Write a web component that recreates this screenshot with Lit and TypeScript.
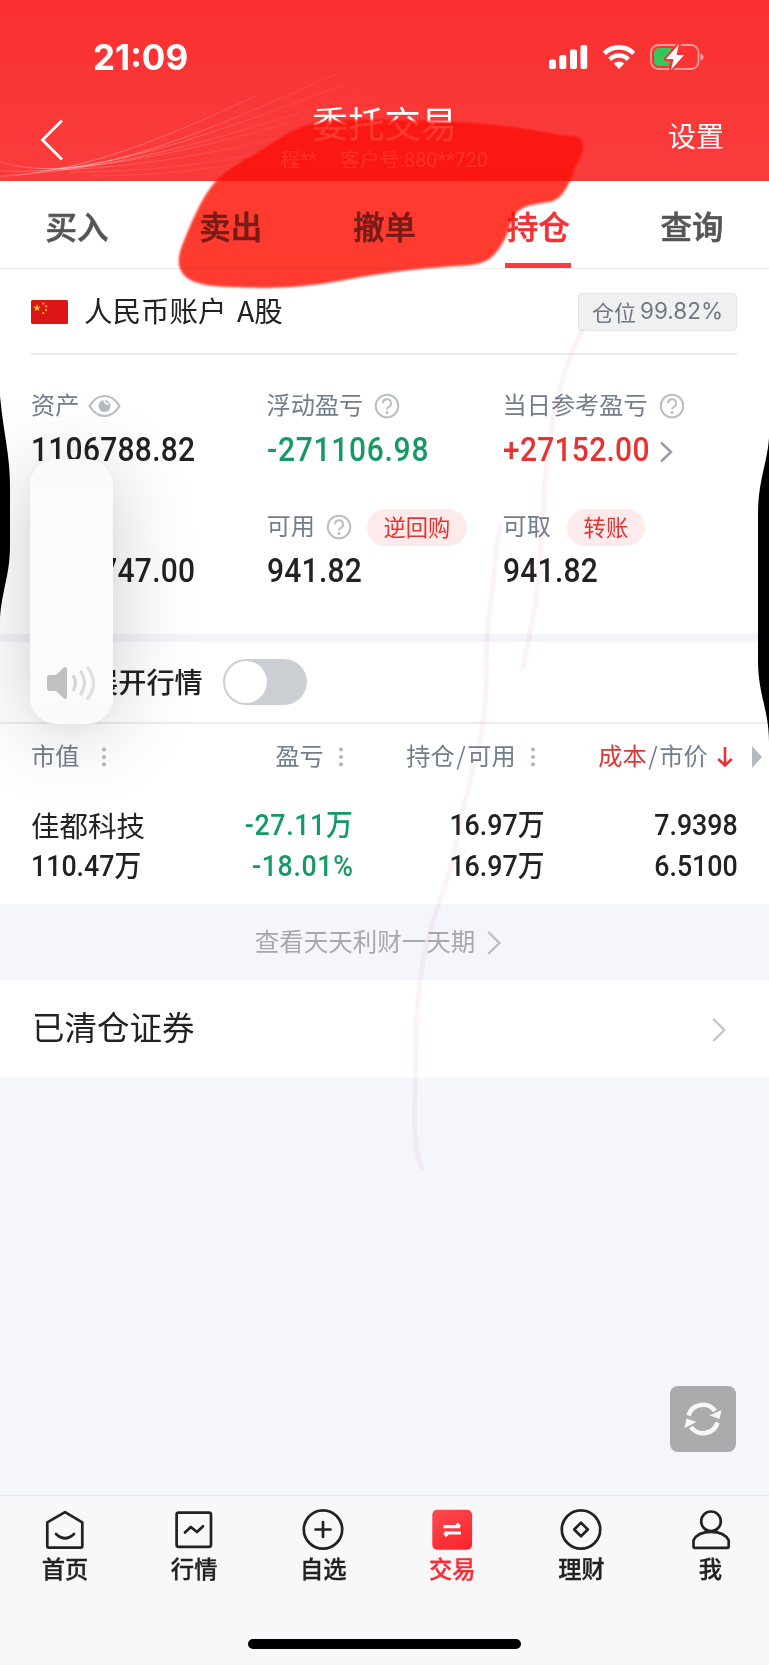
import { LitElement, html, css, svg } from "lit";
import { customElement } from "lit/decorators.js";

const help = html`<svg class="help" width="26" height="26" viewBox="0 0 26 26" fill="none" stroke="#b9bec5" stroke-width="2">
  <circle cx="13" cy="13" r="11.3"/><path d="M9 10.3a4 4 0 1 1 5.8 3.5c-1.3.7-1.8 1.2-1.8 2.7"/><circle cx="13" cy="19.6" r="1.5" fill="#b9bec5" stroke="none"/></svg>`;
const dots = html`<svg class="dots" width="6" height="20" viewBox="0 0 6 20" fill="#b5bac2"><circle cx="3" cy="2.5" r="2.1"/><circle cx="3" cy="10" r="2.1"/><circle cx="3" cy="17.3" r="2.1"/></svg>`;
const chevron = (c: string, w = 2) => html`<svg width="14" height="26" viewBox="0 0 14 26" fill="none" stroke=${c} stroke-width=${w}><path d="M1.3 2 12.4 13 1.3 24"/></svg>`;

const navIcons = [
  svg`<path d="M21 4.2 38.3 14.4V38a1.7 1.7 0 0 1-1.7 1.7H5A1.7 1.7 0 0 1 3.3 38V14.4Z"/><path d="M12 26q9 8.5 18 0"/>`,
  svg`<rect x="3.6" y="4.6" width="34.4" height="34.2" rx="2"/><path d="m12 24.5 5.8-5.5 6.2 5 6-5.8"/>`,
  svg`<circle cx="21" cy="21.5" r="19.2"/><path d="M21 14v15M13.5 21.5h15"/>`,
  svg`<defs><linearGradient id="g" x1="0" y1="0" x2=".6" y2="1"><stop offset="0" stop-color="#fd4b4e"/><stop offset="1" stop-color="#fb2730"/></linearGradient></defs><rect x="1.3" y="1.8" width="39.8" height="40" rx="5" fill="url(#g)" stroke="none"/><path d="M12.5 18.7H29M25.5 15.8l3.5 2.9M30 25H13.5M13.5 25l2.8 3" stroke="#fff" stroke-width="3.2" stroke-linecap="butt"/>`,
  svg`<circle cx="21" cy="21.5" r="19.2"/><path d="m21 14.7 6.8 6.8-6.8 6.8-6.8-6.8z"/>`,
  svg`<circle cx="21" cy="13.3" r="9.8"/><path d="M3.5 38.8v-6.5C6 27 12 23.8 21 23.8S36 27 38.7 32.3v6.5a1 1 0 0 1-1 1H4.5a1 1 0 0 1-1-1Z"/>`,
];

@customElement("app-root")
export class AppRoot extends LitElement {
  static styles = css`
    :host { display: flex; flex-direction: column; position: relative; width: 769px; height: 1665px; overflow: hidden; background: #f4f6fb; color: #222; font-family: "Noto Sans CJK SC", sans-serif; isolation: isolate; white-space: nowrap; }
    * { box-sizing: border-box; }
    svg { display: block; flex: none; }
    header { position: relative; height: 181px; flex: none; background: linear-gradient(#f92f2f, #fa3a3a 75%, #f93b3b); color: #fff; }
    .waves { position: absolute; inset: 0; }
    .status { position: relative; display: flex; align-items: center; height: 114px; padding: 0 65px 0 93px; }
    .clock { font: 700 35px/40px Inter, sans-serif; flex: 1; }
    .sys { display: flex; gap: 15px; align-items: center; }
    .bar { position: relative; display: grid; grid-template-columns: 140px 1fr 140px; height: 66px; margin-top: -13px; }
    .back { padding: 17px 0 0 40px; }
    .title { text-align: center; font-size: 36.3px; line-height: 42px; }
    .sub { display: flex; justify-content: center; gap: 23px; font: 19.8px/28px Roboto, "Noto Sans CJK SC", sans-serif; color: rgba(255,255,255,.72); padding: 4px 1px 0 0; }
    .settings { font-size: 28px; line-height: 40px; padding: 14px 0 0 39px; }
    .tabs { display: grid; grid-template-columns: repeat(5, 1fr); height: 88px; flex: none; background: #fff; border-bottom: 1px solid #ebebeb; }
    .tab { display: flex; flex-direction: column; align-items: center; font-size: 31.5px; line-height: 44px; font-weight: 500; color: #555; padding-top: 22px; -webkit-text-stroke: .6px currentColor; }
    .tab.on { color: #f03336; }
    .tab.on::after { content: ""; width: 66px; height: 5.5px; margin-top: 15.5px; background: #fa3c3c; }
    .account { background: #fff; height: 365px; flex: none; padding: 0 32px 0 31px; }
    .acct { display: flex; align-items: center; height: 86px; padding-top: 1px; border-bottom: 2px solid #ececec; }
    .acct b { font-weight: 400; font-size: 28.5px; line-height: 40px; margin: -3px 0 0 16px; flex: 1; word-spacing: 4px; }
    .tag { display: flex; align-items: center; justify-content: center; gap: 4px; width: 159px; height: 38px; border: 1px solid #e4e4e6; border-radius: 4px; background: #f0f0f1; color: #6e7986; font-size: 22px; line-height: 30px; padding-bottom: 2px; }
    .tag i { font: 22.5px/30px Inter, sans-serif; padding-top: 1px; }
    .stats { display: grid; grid-template-columns: 235.5px 236px 1fr; grid-auto-rows: 121px; padding-top: 31px; }
    .lab { display: flex; align-items: center; height: 40px; font-size: 24.2px; color: #727e8b; }
    .cjk { line-height: 36px; padding-bottom: 4px; }
    .lab .help { margin-left: 11px; }
    .eye { margin-left: 9px; }
    .val { display: flex; align-items: center; height: 48px; }
    .val svg { margin: 4px 0 0 -2px; }
    .num { display: inline-block; font: 500 32.6px/40px Roboto, sans-serif; letter-spacing: .3px; transform: scaleX(.92); transform-origin: 0 50%; }
    .num.green { letter-spacing: .8px; }
    .green { color: #159a62; } .red { color: #e83132; }
    .pill { display: flex; align-items: center; justify-content: center; height: 37px; border-radius: 19px; background: #fdeaea; color: #e83132; font-size: 22.3px; line-height: 32px; padding-bottom: 3px; }
    .p1 { width: 100px; margin-left: 15px; } .p2 { width: 78px; margin-left: 16px; }
    .band { height: 8px; background: #f2f4f9; flex: none; }
    .switchrow { display: flex; align-items: center; height: 82px; flex: none; background: #fff; border-bottom: 2px solid #ececec; padding-left: 90px; font-size: 28.2px; font-weight: 500; }
    .switchrow .cjk { padding-bottom: 3px; }
    .toggle { width: 84px; height: 46px; border-radius: 23px; background: #cbced3; margin: 0 0 0 20px; padding: 2px; }
    .toggle::before { content: ""; display: block; width: 42px; height: 42px; border-radius: 50%; background: #fff; }
    .table { background: #fff; height: 180px; flex: none; }
    .thead { display: flex; align-items: center; height: 65px; font-size: 24.2px; color: #727e8b; padding-left: 31px; }
    .th { display: flex; align-items: center; }
    .th.c1 .dots { margin-left: 22px; }
    .c2 { margin-left: 168px; } .c3 { margin-left: 62px; } .c4 { margin-left: 62px; }
    .dots { margin-left: 14.5px; }
    .slash { margin: 0 1.6px; }
    .c4 svg { margin-left: 9px; } .tri { margin-left: 19px; }
    .rows { display: grid; grid-template-columns: 1fr 207px 191px 193px; grid-auto-rows: 41.5px; align-items: center; justify-items: end; padding: 15px 33px 0 25px; }
    .rows > :nth-child(4n+1) { justify-self: start; margin-left: 6px; }
    .rows > :not(:nth-child(4n+1)) { margin-right: 6px; }
    .name { font-size: 28.5px; line-height: 36px; padding-top: 1px; }
    .cell { display: inline-block; font: 500 29.4px/40px Roboto, "Noto Sans CJK SC", sans-serif; transform: scaleX(.91); transform-origin: 100% 50%; }
    .cell.green { letter-spacing: .7px; }
    .cell.l { transform-origin: 0 50%; }
    .cell u { text-decoration: none; font-size: 29.5px; }
    .more { display: flex; align-items: center; justify-content: center; gap: 12px; height: 76px; flex: none; color: #a8a8a8; font-size: 24.5px; padding-right: 13px; }
    .more .cjk { padding-bottom: 2px; }
    .more svg, .cleared svg { margin-top: 1px; }
    .cleared { display: flex; align-items: center; justify-content: space-between; height: 98px; flex: none; background: #fff; font-size: 32.5px; padding: 0 43px 0 32px; }
    .cleared .cjk { padding-bottom: 6px; }
    .space { flex: 1; display: flex; justify-content: flex-end; align-items: flex-end; padding: 0 33px 43px; }
    .refresh { display: grid; place-items: center; width: 66px; height: 66px; border-radius: 8px; background: #aaabad; }
    nav { height: 170px; flex: none; display: grid; grid-template-columns: repeat(6, 129.1px); padding-left: .5px; background: #f8f8fb; border-top: 1px solid #e8e9ec; position: relative; }
    .item { display: flex; flex-direction: column; align-items: center; padding-top: 12px; font-size: 23.3px; line-height: 34px; font-weight: 500; color: #222; -webkit-text-stroke: .3px currentColor; }
    .item svg { fill: none; stroke: currentColor; stroke-width: 2.7; stroke-linejoin: round; stroke-linecap: round; }
    .item.on { color: #fb2b33; }
    .home { position: absolute; left: 248px; top: 143px; width: 273px; height: 10px; border-radius: 5px; background: #000; }
    .volume { position: absolute; left: 30px; top: 459px; width: 83px; height: 265px; border-radius: 27px; background: linear-gradient(#fafafc, #fbfbfd 60%, #fafafa); box-shadow: 0 4px 14px rgba(0,0,0,.03), 0 8px 84px rgba(0,0,0,.2); display: flex; align-items: flex-end; justify-content: center; padding: 0 1px 23px 0; }
    .marks { position: absolute; left: 0; top: 0; pointer-events: none; }
    .mult { mix-blend-mode: multiply; }
    .soft { filter: blur(1.3px); }
  `;

  stat(label: unknown, value: unknown) {
    return html`<div><div class="lab">${label}</div><div class="val">${value}</div></div>`;
  }

  render() {
    const blob = "M217 180C203 195 194 217 186 236C179 253 175 264 184 275C195 287 222 287 255 287.500C305 289 335 281 373 275C410 269 440 267 470 265C488 263 495 256 503 242C510 231 510 215 521 209C532 202 546 204 555 200C566 194 571 178 575 168C580 157 586 148 582 141C579 134 568 137 553 134C515 126 470 122 420 121C385 119 335 119 312 124C288 130 275 143 257 153C244 160 230 168 217 180Z";
    const wan = html`<u>万</u>`;
    return html`
      <header>
        <svg class="waves" width="769" height="181" fill="none" stroke="url(#fade)">
          <defs><linearGradient id="fade" gradientUnits="userSpaceOnUse" x1="0" y1="0" x2="420" y2="0"><stop offset="0" stop-color="#fff" stop-opacity=".4"/><stop offset=".16" stop-color="#fff" stop-opacity="1"/><stop offset=".4" stop-color="#fff" stop-opacity=".6"/><stop offset=".62" stop-color="#fff" stop-opacity=".25"/><stop offset="1" stop-color="#fff" stop-opacity="0"/></linearGradient></defs>
          <path d="M0 177C80 170 140 150 255 96" opacity=".36"/>
          <path d="M0 162C70 182 150 158 345 70" opacity=".42"/>
          <path d="M0 171C90 175 180 148 388 68" opacity=".38"/>
          <path d="M0 176C120 168 210 145 420 72" opacity=".32"/>
          <path d="M60 169C160 160 250 137 445 76" opacity=".26"/>
          <path d="M60 170C170 165 270 145 480 84" opacity=".22"/>
          <path d="M70 172C180 172 260 155 330 137" opacity=".16"/>
          <path d="M90 176C180 176 240 164 300 152" opacity=".14"/>
        </svg>
        <div class="status">
          <span class="clock">21:09</span>
          <div class="sys">
            <svg width="39" height="26" viewBox="0 0 39 26" fill="#fff"><rect x="0" y="15.500" width="7" height="9.500" rx="2"/><rect x="10.300" y="11" width="7" height="14" rx="2"/><rect x="21" y="5.500" width="7" height="19.500" rx="2"/><rect x="31.500" y="1" width="6.700" height="24" rx="2"/></svg>
            <svg width="32" height="26" viewBox="0 0 32 26" fill="none" stroke="#fff" stroke-width="4.600"><path d="M1.300 9.400a21 21 0 0 1 29.400 0M6.700 15.400a13.200 13.200 0 0 1 18.600 0"/><path d="M16 25l-5.300-5.400a7.500 7.500 0 0 1 10.600 0z" fill="#fff" stroke="none"/></svg>
            <svg width="54" height="28" viewBox="0 0 54 28"><rect x="1" y="2" width="47.500" height="24" rx="7.500" fill="none" stroke="#fff" stroke-opacity=".5" stroke-width="1.800"/><path d="M50.500 10.500q3 1 3 3.500t-3 3.500z" fill="#fff" opacity=".55"/><path d="M9 5h13l-5 10h4l-2 8H9a5 5 0 0 1-5-5v-8a5 5 0 0 1 5-5z" fill="#35c759"/><path d="M29 1 16 16h7.500L21 27 34 12h-7.500z" fill="#fff" stroke="#fa3434" stroke-width="4" paint-order="stroke" stroke-linejoin="round"/></svg>
          </div>
        </div>
        <div class="bar">
          <div class="back"><svg width="24" height="44" viewBox="0 0 24 44" fill="none" stroke="#fff" stroke-width="2.800"><path d="M22 2.500 2.500 22 22 41.500"/></svg></div>
          <div><div class="title">委托交易</div><div class="sub"><span>程**</span><span>客户号:880**720</span></div></div>
          <div class="settings">设置</div>
        </div>
      </header>
      <div class="tabs">${["买入", "卖出", "撤单", "持仓", "查询"].map((t, i) => html`<div class="tab ${i === 3 ? "on" : ""}">${t}</div>`)}</div>
      <section class="account">
        <div class="acct">
          <svg width="37" height="24" viewBox="0 0 37 24"><rect width="37" height="24" rx="1.500" fill="#dc1517"/><g fill="#ffde00"><path d="m6 4 .9 2.700h2.900L7.500 8.400l.9 2.700L6 9.400l-2.400 1.700.9-2.700-2.300-1.700h2.900z"/><circle cx="12.300" cy="3.500" r="1"/><circle cx="15" cy="6.300" r="1"/><circle cx="15" cy="10" r="1"/><circle cx="12.300" cy="13" r="1"/></g></svg>
          <b>人民币账户 A股</b>
          <span class="tag">仓位<i>99.82%</i></span>
        </div>
        <div class="stats">
          ${this.stat(html`<span class="cjk">资产</span><svg class="eye" width="33" height="24" viewBox="0 0 33 24" fill="none" stroke="#b9bec5" stroke-width="2.200"><path d="M1.500 12Q7.500 2 16.500 2T31.500 12Q25.500 22 16.500 22T1.500 12Z"/><circle cx="16.500" cy="12" r="6" fill="#b4bac2" stroke="none"/><path d="M16 6.500q1 3.500 5 3.500" stroke="#fff" stroke-width="1.600"/></svg>`, html`<span class="num">1106788.82</span>`)}
          ${this.stat(html`<span class="cjk">浮动盈亏</span>${help}`, html`<span class="num green">-271106.98</span>`)}
          ${this.stat(html`<span class="cjk">当日参考盈亏</span>${help}`, html`<span class="num red">+27152.00</span><svg width="13" height="22" viewBox="0 0 13 22" fill="none" stroke="#9aa1aa" stroke-width="2.600"><path d="M1 1.500 11 11 1 20.500"/></svg>`)}
          ${this.stat("", html`<span class="num">1104747.00</span>`)}
          ${this.stat(html`<span class="cjk">可用</span>${help}<span class="pill p1">逆回购</span>`, html`<span class="num">941.82</span>`)}
          ${this.stat(html`<span class="cjk">可取</span><span class="pill p2">转账</span>`, html`<span class="num">941.82</span>`)}
        </div>
      </section>
      <div class="band"></div>
      <div class="switchrow"><span class="cjk">展开行情</span><div class="toggle"></div></div>
      <section class="table">
        <div class="thead">
          <div class="th c1"><span class="cjk">市值</span>${dots}</div>
          <div class="th c2"><span class="cjk">盈亏</span>${dots}</div>
          <div class="th c3"><span class="cjk">持仓<span class="slash">/</span>可用</span>${dots}</div>
          <div class="th c4"><span class="cjk"><span class="red">成本</span><span class="slash">/</span>市价</span><svg width="16" height="22" viewBox="0 0 16 22" fill="none" stroke="#e83132" stroke-width="2.600"><path d="M8 1v18.500M1.200 13 8 19.500 14.800 13"/></svg></div>
          <svg class="tri" width="10" height="22"><path d="M0 0 10 11 0 22z" fill="#b5bac2"/></svg>
        </div>
        <div class="rows">
          <span class="name">佳都科技</span><span class="cell green">-27.11${wan}</span><span class="cell">16.97${wan}</span><span class="cell">7.9398</span>
          <span class="cell l">110.47${wan}</span><span class="cell green">-18.01%</span><span class="cell">16.97${wan}</span><span class="cell">6.5100</span>
        </div>
      </section>
      <div class="more"><span class="cjk">查看天天利财一天期</span>${chevron("#bbbbbd", 2.3)}</div>
      <div class="cleared"><span class="cjk">已清仓证券</span>${chevron("#c4c4c6", 2.3)}</div>
      <div class="space"><div class="refresh"><svg width="38" height="36" viewBox="0 0 38 36" fill="none" stroke="#f7f7f7" stroke-width="4.600"><path d="M4.500 14.500A15 15 0 0 1 31 10M33.500 21.500A15 15 0 0 1 7 26"/><path d="M37.500 9 35.500 18 25.500 14.500zM.5 27 2.500 17.500 12.500 21z" fill="#f7f7f7" stroke="none"/></svg></div></div>
      <nav>
        ${["首页", "行情", "自选", "交易", "理财", "我"].map((t, i) => html`<div class="item ${i === 3 ? "on" : ""}"><svg width="42" height="43" viewBox="0 0 42 43">${navIcons[i]}</svg>${t}</div>`)}
        <div class="home"></div>
      </nav>
      <div class="volume"><svg width="52" height="36" viewBox="0 0 52 36" fill="none" stroke-linecap="round" stroke-width="3.200"><path d="M5 10h6L19 2.500Q22 1 22 4v28q0 3-3 1.500L11 26H5q-3 0-3-3V13q0-3 3-3z" fill="#c0c0c0"/><path d="M28.500 11.500q4 6.500 0 13" stroke="#d4d4d4"/><path d="M36 7q7 11 0 22" stroke="#dadada"/><path d="M43 3q11 15.500 0 30.500" stroke="#e0e0e0"/></svg></div>
      <svg class="marks mult" width="769" height="1665"><path class="soft" d=${blob} fill="#ff3b30"/></svg>
      <svg class="marks" width="769" height="1665" fill="none">
        <path class="soft" d=${blob} fill="#ff3b30" opacity=".2"/>
        <g stroke="#d030a8" stroke-opacity=".06" stroke-width="5" stroke-linecap="round"><path d="M582 332C567 355 553 410 548 450C542 500 542 560 535 605C531 632 526 648 523 668"/><path d="M501 525C494 545 496 570 491 600C485 635 487 665 486 690C484 750 462 800 457 840C449 885 433 910 424 958C413 1010 416 1070 415 1100C414 1140 416 1155 422 1168"/></g>
        <path d="M0 396C3 430 10 455 10 485V545C10 575 2 590 0 618ZM769 438C767 465 758 480 758 515V660C758 695 769 710 769 742Z" fill="#000"/>
      </svg>`;
  }
}
